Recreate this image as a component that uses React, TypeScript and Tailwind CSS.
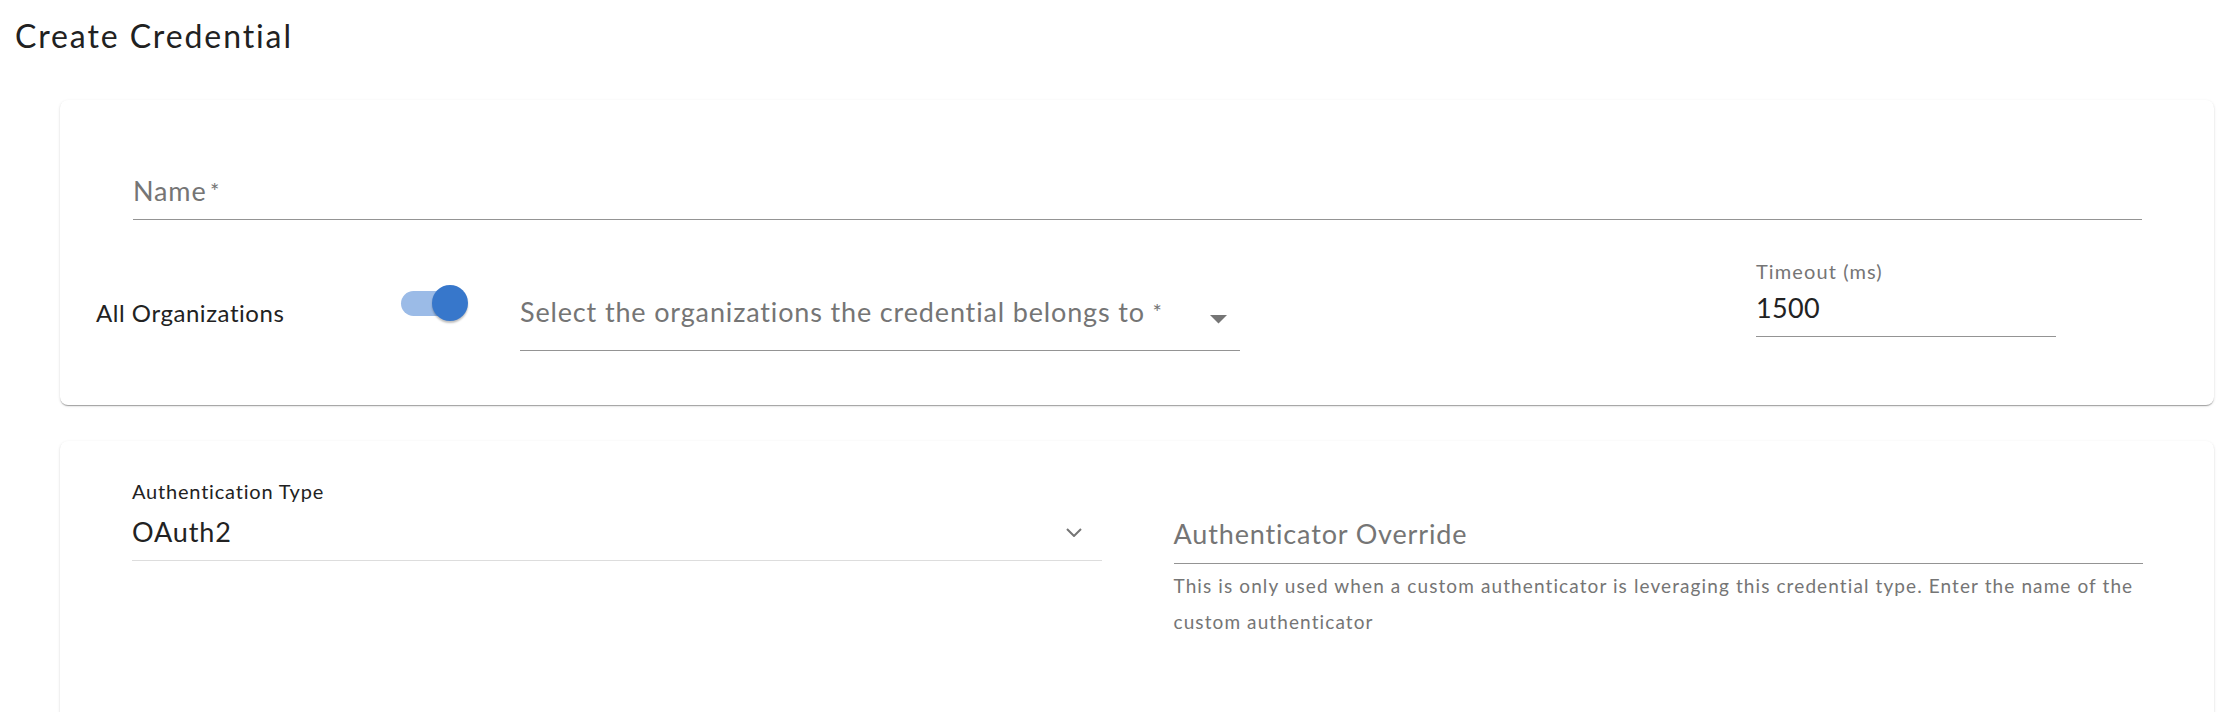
import React from 'react';

const cardShadow =
  'rounded-lg bg-white shadow-[0_2px_1px_-1px_rgba(0,0,0,0.2),0_1px_1px_0_rgba(0,0,0,0.14),0_1px_3px_0_rgba(0,0,0,0.12)]';

/* MUI-ish toggle, checked state */
const Toggle: React.FC = () => (
  <div className="relative w-[61px] h-[36px]">
    <div className="absolute left-0 top-[6px] h-[25px] w-[61px] rounded-full bg-[#9bbbe7]" />
    <div className="absolute left-[31px] top-0 h-[36px] w-[36px] rounded-full bg-[#3777cb] shadow-[0_2px_2px_rgba(0,0,0,0.25)]" />
  </div>
);

const CreateCredential: React.FC = () => {
  return (
    <div className="min-h-screen w-full bg-white font-[Lato,sans-serif] text-[#212121]">
      {/* Page title */}
      <h1 className="pl-[15px] pt-[17px] text-[32px] leading-[38px] font-normal tracking-[1.9px]">Create Credential</h1>

      {/* ── General card ─────────────────────────────────────────── */}
      <div className={`${cardShadow} ml-[60px] mr-[22px] mt-[45px] h-[305px]`}>
        <div className="pl-[73px] pr-[72px] pt-[75px]">
          <div className="border-b border-[#949494] pb-[12px]">
            <span className="text-[27px] leading-[32px] tracking-[0.85px] text-[#757575]">
              Name<span className="text-[22px] align-top">&thinsp;*</span>
            </span>
          </div>
        </div>

        <div className="flex items-start pl-[36px]">
          <div className="w-[305px] mt-[79px] text-[24px] leading-[28px] tracking-[0.55px] text-[#222]">All Organizations</div>

          <div className="w-[119px] mt-[65px]">
            <Toggle />
          </div>

          <div className="w-[720px] mt-[76px] flex items-start justify-between border-b border-[#949494] pb-[22px] pr-[13px]">
            <span className="text-[27px] leading-[32px] tracking-[0.85px] text-[#757575]">
              Select the organizations the credential belongs to<span className="text-[22px] align-top ml-[4px]">&thinsp;*</span>
            </span>
            <svg width="17" height="9" viewBox="0 0 17 9" className="mt-[19px]">
              <polygon points="0,0 17,0 8.5,8.5" fill="#757575" />
            </svg>
          </div>

          <div className="ml-[516px] w-[300px] mt-[39px]">
            <div className="text-[20px] leading-[24px] tracking-[1.1px] text-[#757575]">Timeout (ms)</div>
            <div className="mt-[9px] border-b border-[#949494] pb-[12px] text-[27px] leading-[32px] tracking-[0.3px] text-[#222]">
              1500
            </div>
          </div>
        </div>
      </div>

      {/* ── Authentication card ──────────────────────────────────── */}
      <div className={`${cardShadow} ml-[60px] mr-[22px] mt-[36px] h-[320px]`}>
        <div className="grid grid-cols-2 gap-[72px] pl-[72px] pr-[71px]">
          <div className="pt-[38px]">
            <div className="text-[20px] leading-[24px] tracking-[0.8px] text-[#222]">Authentication Type</div>
            <div className="mt-[13px] flex items-start justify-between border-b border-[#dddddd] pb-[12px] pr-[20px]">
              <span className="text-[27px] leading-[32px] tracking-[0.9px] text-[#222]">OAuth2</span>
              <svg width="16" height="9" viewBox="0 0 16 9" className="mt-[12px]" fill="none">
                <polyline points="1,1 8,8 15,1" stroke="#757575" strokeWidth="2" />
              </svg>
            </div>
          </div>

          <div className="pt-[77px]">
            <div className="border-b border-[#949494] pb-[13px] text-[27px] leading-[32px] tracking-[0.85px] text-[#757575]">
              Authenticator Override
            </div>
            <p className="mt-[4px] text-[19px] leading-[36px] tracking-[1.1px] text-[#757575]">
              This is only used when a custom authenticator is leveraging this credential type. Enter the name of the
              custom authenticator
            </p>
          </div>
        </div>
      </div>
    </div>
  );
};

export default function App() {
  return <CreateCredential />;
}
